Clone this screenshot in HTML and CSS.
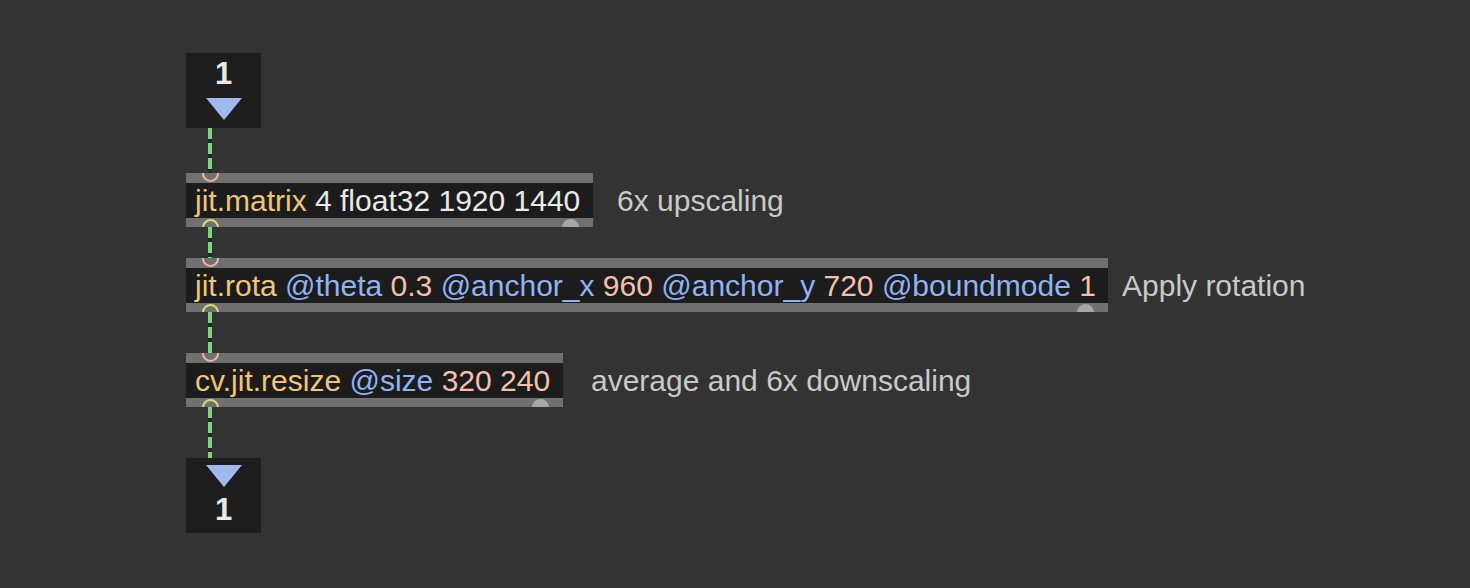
FILE: index.html
```html
<!DOCTYPE html>
<html>
<head>
<meta charset="utf-8">
<link rel="stylesheet" href="styles.css">
</head>
<body>
<div class="patch">
  <div class="io io-in">
    <span class="io-num">1</span>
    <span class="tri"></span>
  </div>
  <div class="cable c1"></div>
  <div class="row">
    <div class="obj w1"><span class="name">jit.matrix</span> <span class="arg">4 float32 1920 1440</span><span class="dump"></span></div>
    <div class="comment m1">6x upscaling</div>
  </div>
  <div class="cable c2"></div>
  <div class="row">
    <div class="obj w2"><span class="name">jit.rota</span> <span class="attr">@theta</span> <span class="val">0.3</span> <span class="attr">@anchor_x</span> <span class="val">960</span> <span class="attr">@anchor_y</span> <span class="val">720</span> <span class="attr">@boundmode</span> <span class="val">1</span><span class="dump"></span></div>
    <div class="comment m2">Apply rotation</div>
  </div>
  <div class="cable c3"></div>
  <div class="row">
    <div class="obj w3"><span class="name">cv.jit.resize</span> <span class="attr">@size</span> <span class="val">320 240</span><span class="dump"></span></div>
    <div class="comment m3">average and 6x downscaling</div>
  </div>
  <div class="cable c4"></div>
  <div class="io io-out">
    <span class="tri"></span>
    <span class="io-num">1</span>
  </div>
</div>
</body>
</html>
```

FILE: styles.css
```css
html, body {
  margin: 0;
  padding: 0;
  background: #333333;
  height: 100%;
}

body {
  font-family: "Liberation Sans", Arial, sans-serif;
  overflow: hidden;
}

.patch {
  display: flex;
  flex-direction: column;
  align-items: flex-start;
  padding: 53px 0 0 186px;
}

/* inlet / outlet boxes */
.io {
  width: 75px;
  height: 75px;
  box-sizing: border-box;
  background: #1e1e1e;
  display: flex;
  flex-direction: column;
  align-items: center;
}

.io-num {
  font-weight: bold;
  font-size: 31px;
  line-height: 30px;
  color: #e9e9e9;
}

.tri {
  width: 0;
  height: 0;
  border-left: 18.5px solid transparent;
  border-right: 18.5px solid transparent;
  border-top: 22px solid #a2b9ef;
}

.io-in {
  padding-top: 6px;
}
.io-in .tri {
  margin-top: 9px;
}

.io-out {
  padding-top: 7px;
}
.io-out .io-num {
  margin-top: 8px;
}

/* patch cords */
.cable {
  width: 4px;
  margin-left: 22px;
  background: repeating-linear-gradient(to bottom, #7ed57b 0, #7ed57b 11px, #1f2b1f 11px, #1f2b1f 15px);
}
.c1 { height: 45px; }
.c2 { height: 31px; }
.c3 { height: 41px; }
.c4 { height: 51px; }

/* rows with object + comment */
.row {
  display: flex;
  align-items: baseline;
}

.obj {
  position: relative;
  overflow: hidden;
  box-sizing: border-box;
  height: 54px;
  padding: 10px 0 0 9px;
  font-size: 30px;
  line-height: 35px;
  white-space: nowrap;
  color: #e8e8e8;
  background: linear-gradient(to bottom, #707070 0, #707070 10px, #1c1c1c 10px, #1c1c1c 45px, #707070 45px, #707070 54px);
}

.w1 { width: 407px; }
.w2 { width: 922px; }
.w3 { width: 377px; }

.obj::before,
.obj::after {
  content: "";
  position: absolute;
  left: 15.5px;
  width: 17px;
  height: 17px;
  box-sizing: border-box;
  border-radius: 50%;
  border: 2px solid;
}

.obj::before {
  top: -8.5px;
  border-color: #f1b4a0;
}

.obj::after {
  bottom: -8.5px;
  border-color: #d8dc78;
}

.dump {
  position: absolute;
  right: 14.5px;
  bottom: -8.5px;
  width: 17px;
  height: 17px;
  border-radius: 50%;
  background: #a7a7a7;
}

.name { color: #efc577; }
.arg { color: #e8e8e8; }
.attr { color: #8fb3f3; }
.val { color: #f4c0ad; }

.comment {
  font-size: 30px;
  line-height: 35px;
  color: #c9c9c9;
  white-space: nowrap;
}

.m1 { margin-left: 24px; }
.m2 { margin-left: 14px; }
.m3 { margin-left: 28px; }
```
